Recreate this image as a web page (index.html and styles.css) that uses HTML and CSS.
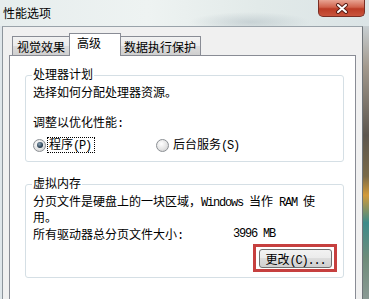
FILE: index.html
```html
<!DOCTYPE html>
<html lang="zh-CN">
<head>
    <meta charset="UTF-8">
    <title>性能选项</title>
    <link rel="stylesheet" href="styles.css">
</head>
<body>
    <div class="window">
        <div class="titlebar">
            <span class="title">性能选项</span>
            <button class="close" aria-label="关闭">
                <svg width="14" height="11" viewBox="0 0 14 11">
                    <path d="M3 2 L11 9 M11 2 L3 9" stroke="#5a1e16" stroke-width="4" stroke-linecap="round"/>
                    <path d="M3 2 L11 9 M11 2 L3 9" stroke="#fff" stroke-width="2" stroke-linecap="round"/>
                </svg>
            </button>
        </div>

        <div class="frame">
            <div class="body">
                <div class="tabs">
                    <div class="tab tab-first">视觉效果</div>
                    <div class="tab tab-active">高级</div>
                    <div class="tab tab-last">数据执行保护</div>
                </div>

                <div class="panel">
                    <!-- 处理器计划 -->
                    <div class="group group-cpu">
                        <div class="legend">处理器计划</div>
                        <p class="line">选择如何分配处理器资源。</p>
                        <p class="line line-gap">调整以优化性能<span class="en">:</span></p>
                        <div class="radios">
                            <label class="option option-first">
                                <span class="radio on"></span>
                                <span class="focus">程序<span class="en">(P)</span></span>
                            </label>
                            <label class="option">
                                <span class="radio"></span>
                                <span class="option-text">后台服务<span class="en">(S)</span></span>
                            </label>
                        </div>
                    </div>

                    <!-- 虚拟内存 -->
                    <div class="group group-mem">
                        <div class="legend">虚拟内存</div>
                        <p class="para">分页文件是硬盘上的一块区域，<span class="en">Windows </span>当作<span class="en"> RAM </span>使<br>用。</p>
                        <div class="size-row">
                            <span class="size-label">所有驱动器总分页文件大小<span class="en">:</span></span>
                            <span class="en">3996 MB</span>
                        </div>
                        <div class="btn-row">
                            <div class="mark">
                                <button class="btn">更改<span class="en">(C)...</span></button>
                            </div>
                        </div>
                    </div>
                </div>
            </div>
            <div class="edge"></div>
        </div>
    </div>
</body>
</html>
```

FILE: styles.css
```css
* {
    box-sizing: border-box;
}

body {
    margin: 0;
    width: 369px;
    height: 299px;
    overflow: hidden;
    font-family: "Noto Sans CJK SC", sans-serif;
    font-size: 12px;
    line-height: 14px;
    color: #000;
}

.window {
    display: flex;
    flex-direction: column;
    height: 299px;
    background: #dfe6ea;
}

/* title bar */
.titlebar {
    height: 26px;
    display: flex;
    justify-content: space-between;
    align-items: flex-start;
    background:
        radial-gradient(ellipse 60px 10px at 250px 22px, rgba(150, 165, 175, 0.35), transparent),
        linear-gradient(to right, #e6eded, #eef3f2 40%, #e2eae9 70%, #dbe4e6);
}

.title {
    padding-left: 3px;
    margin-top: 6px;
}

.close {
    width: 47px;
    height: 17px;
    margin-right: 4px;
    padding: 0;
    border: 1px solid #7a2e24;
    border-top: none;
    border-radius: 0 0 5px 5px;
    background: linear-gradient(#e8a493, #d0624c 45%, #bb3c26 55%, #c9553d);
    display: flex;
    align-items: center;
    justify-content: center;
}

/* window body */
.frame {
    flex: 1;
    display: flex;
    padding-left: 2px;
    min-height: 0;
}

.body {
    flex: 1;
    display: flex;
    flex-direction: column;
    overflow: hidden;
    background: #f0f0f0;
    border-top: 1px solid #9aa3aa;
    border-left: 1px solid #8d959c;
    border-right: 1px solid #6f757a;
    padding: 6px 6px 0 6px;
}

.edge {
    width: 6px;
    background: linear-gradient(#c8cfd2, #a39a8e 15%, #5d574f 40%, #7a6a48 55%, #d29a3a 62%, #3d8b8a 72%, #6e8c7a 85%, #8a9a94);
}

/* tabs */
.tabs {
    position: relative;
    z-index: 1;
    display: flex;
    align-items: flex-end;
    height: 23px;
    margin-bottom: -1px;
    padding-left: 3px;
}

.tab {
    height: 19px;
    margin-bottom: 1px;
    padding-top: 3px;
    white-space: nowrap;
    border: 1px solid #898c95;
    border-bottom: none;
    background: linear-gradient(#f2f2f2, #ebebeb 50%, #dddddd 50%, #cfcfcf);
}

.tab-first {
    width: 57px;
    padding-left: 4px;
    border-right: none;
}

.tab-active {
    width: 52px;
    height: 23px;
    margin-bottom: 0;
    padding-top: 2px;
    padding-left: 7px;
    background: #fff;
}

.tab-last {
    width: 80px;
    padding-left: 3px;
    border-left: none;
}

/* tab page */
.panel {
    width: 347px;
    height: 260px;
    flex: none;
    background: #fff;
    border: 1px solid #898c95;
    padding: 0 11px 0 15px;
}

.group {
    border: 1px solid #d5dfe5;
    border-radius: 3px;
    padding: 0 7px;
}

.legend {
    display: table;
    margin: -9px 0 0 -1px;
    padding: 0 1px;
    background: #fff;
}

.group-cpu {
    margin-top: 19px;
    padding-bottom: 9px;
}

.group-mem {
    margin-top: 22px;
    padding-bottom: 5px;
}

.line {
    margin: 4px 0 0;
}

.line-gap {
    margin-top: 16px;
}

.en {
    font-family: "Liberation Mono", monospace;
    font-size: 12px;
    letter-spacing: -1.2px;
}

/* radio buttons */
.radios {
    display: flex;
    align-items: center;
    height: 14px;
    margin-top: 7px;
}

.option {
    display: flex;
    align-items: center;
}

.option-first {
    width: 123px;
}

.radio {
    width: 13px;
    height: 13px;
    flex: none;
    border-radius: 50%;
    border: 1px solid #8b8f94;
    background: radial-gradient(circle at 40% 35%, #ffffff, #e4e4e4 55%, #c9c9c9);
    display: flex;
    align-items: center;
    justify-content: center;
}

.radio.on::after {
    content: "";
    width: 6px;
    height: 6px;
    border-radius: 50%;
    background: radial-gradient(circle at 40% 35%, #8fa6b8, #2c4356 60%, #14222e);
}

.focus {
    margin-left: 1px;
    padding: 0 3px 0 1px;
    line-height: 12px;
    border: 1px dotted #000;
}

.option-text {
    margin-left: 4px;
}

/* virtual memory */
.para {
    margin: 4px 0 0;
    line-height: 13px;
}

.size-row {
    display: flex;
    margin-top: 4px;
}

.size-label {
    width: 200px;
}

.btn-row {
    display: flex;
    justify-content: flex-end;
    margin: 1px -1px 0 0;
}

.mark {
    border: 3px solid #c6403f;
    padding: 2px 2px 1px 3px;
}

.btn {
    display: block;
    width: 73px;
    height: 19px;
    padding: 0;
    font: inherit;
    line-height: 17px;
    color: #000;
    text-align: center;
    border: 1px solid #707070;
    border-radius: 3px;
    background: linear-gradient(#f2f2f2, #ebebeb 50%, #dddddd 50%, #cfcfcf);
}
```
